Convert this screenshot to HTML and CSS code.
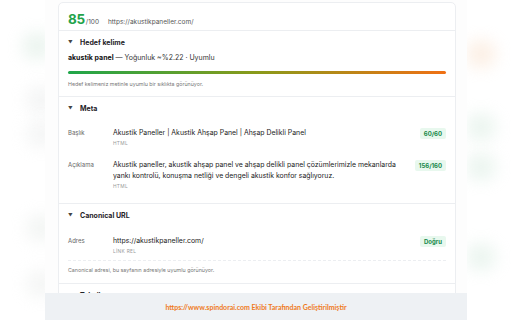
FILE: index.html
```html
<!DOCTYPE html>
<html lang="tr">
<head>
  <meta charset="UTF-8">
  <meta name="viewport" content="width=device-width, initial-scale=1.0">
  <link rel="stylesheet" href="styles.css">
  <title>SEO Analizi</title>
</head>
<body>
  <div class="blob blob-l1"></div>
  <div class="blob blob-l2"></div>
  <div class="blob blob-l3"></div>
  <div class="blob blob-l4"></div>
  <div class="blob blob-l5"></div>
  <div class="blob blob-r1"></div>
  <div class="blob blob-r2"></div>
  <div class="blob blob-r3"></div>
  <div class="blob blob-r4"></div>

  <main class="page">
    <div class="card">
      <header class="card-head">
        <span class="score">85</span><span class="score-max">/100</span>
        <span class="url">https://akustikpaneller.com/</span>
      </header>

      <section class="sec">
        <h2 class="sec-title"><span class="caret">▼</span>Hedef kelime</h2>
        <p class="kw"><b>akustik panel</b> — Yoğunluk ~%2.22 · Uyumlu</p>
        <div class="bar"></div>
        <p class="note">Hedef kelimeniz metinle uyumlu bir sıklıkta görünüyor.</p>
      </section>

      <section class="sec sec-meta">
        <h2 class="sec-title"><span class="caret">▼</span>Meta</h2>
        <div class="row">
          <span class="label">Başlık</span>
          <div class="value">
            <p>Akustik Paneller | Akustik Ahşap Panel | Ahşap Delikli Panel</p>
            <span class="src">HTML</span>
          </div>
          <span class="badge">60/60</span>
        </div>
        <div class="row">
          <span class="label">Açıklama</span>
          <div class="value">
            <p>Akustik paneller, akustik ahşap panel ve ahşap delikli panel çözümlerimizle mekanlarda yankı kontrolü, konuşma netliği ve dengeli akustik konfor sağlıyoruz.</p>
            <span class="src">HTML</span>
          </div>
          <span class="badge">156/160</span>
        </div>
      </section>

      <section class="sec sec-canon">
        <h2 class="sec-title"><span class="caret">▼</span>Canonical URL</h2>
        <div class="row">
          <span class="label">Adres</span>
          <div class="value">
            <p>https://akustikpaneller.com/</p>
            <span class="src">LİNK REL</span>
          </div>
          <span class="badge">Doğru</span>
        </div>
        <p class="note dotted">Canonical adresi, bu sayfanın adresiyle uyumlu görünüyor.</p>
      </section>

      <section class="sec">
        <h2 class="sec-title"><span class="caret">▼</span>Teknik</h2>
      </section>
    </div>

    <footer class="foot">https://www.spindorai.com Ekibi Tarafından Geliştirilmiştir</footer>
  </main>
</body>
</html>
```

FILE: styles.css
```css
*, *::before, *::after {
  margin: 0;
  padding: 0;
  box-sizing: border-box;
}

body {
  height: 320px;
  overflow: hidden;
  background: #ffffff;
  font-family: Inter, "Noto Sans", sans-serif;
  color: #1f2328;
  position: relative;
}

/* faint blurred shapes on both sides of the panel */
.blob {
  position: absolute;
  width: 30px;
  height: 28px;
  border-radius: 50%;
  filter: blur(8px);
  opacity: .4;
}

.blob-l1 { left: 22px; top: 32px; background: #cfe5d8; }
.blob-l2 { left: 26px; top: 86px; background: #e4e6e6; }
.blob-l3 { left: 26px; top: 120px; background: #e6e8e8; }
.blob-l4 { left: 26px; top: 214px; background: #e2e8e4; }
.blob-l5 { left: 26px; top: 270px; background: #e6e9e7; }
.blob-r1 { left: 466px; top: 40px; background: #f8d9bf; }
.blob-r2 { left: 466px; top: 113px; background: #cfe7d9; }
.blob-r3 { left: 466px; top: 153px; background: #cfe7d9; }
.blob-r4 { left: 466px; top: 243px; background: #cfe7d9; }

.page {
  position: relative;
  width: 422px;
  height: 320px;
  margin: 0 auto;
  padding: 2px 11px 0 13px;
  background: #fdfdfd;
}

.card {
  background: #fff;
  border: 1px solid #eceef1;
  border-radius: 5px;
}

.card-head {
  height: 28px;
  display: flex;
  align-items: baseline;
  padding: 8px 9px 0;
  border-bottom: 1px solid #eceef1;
}

.score {
  font-size: 13.5px;
  font-weight: 700;
  color: #22a34a;
  line-height: 16px;
  letter-spacing: -.3px;
}

.score-max {
  font-size: 6.5px;
  color: #555;
  margin-left: 1px;
}

.url {
  font-size: 6.5px;
  color: #555;
  margin-left: 9px;
}

.sec {
  padding: 7px 9px 8px;
  border-bottom: 1px solid #eceef1;
}

.sec-title {
  font-size: 7px;
  font-weight: 700;
  line-height: 10px;
  display: flex;
  align-items: center;
}

.caret {
  font-size: 4.5px;
  color: #444;
  width: 12px;
}

.kw {
  margin-top: 5px;
  font-size: 7px;
  line-height: 10px;
  color: #333;
}

.kw b {
  color: #111;
}

.bar {
  margin-top: 8px;
  height: 3px;
  border-radius: 2px;
  background: linear-gradient(90deg, #1fa64a, #8a9a1a 50%, #f07014);
}

.note {
  margin-top: 6px;
  font-size: 5.3px;
  line-height: 8px;
  color: #777;
}

.sec-meta {
  padding-bottom: 13px;
}

.sec-canon {
  padding-bottom: 9px;
}

.row {
  display: grid;
  grid-template-columns: 45px 1fr auto;
  align-items: start;
  margin-top: 13px;
}

.row + .row {
  margin-top: 12px;
}

.sec-canon .row {
  margin-top: 14px;
}

.label {
  font-size: 6px;
  line-height: 11px;
  color: #666;
}

.value {
  padding-right: 12px;
}

.value p {
  font-size: 6.9px;
  line-height: 11px;
  color: #222;
}

.src {
  display: block;
  margin-top: 1px;
  font-size: 4.8px;
  line-height: 8px;
  letter-spacing: .3px;
  color: #999;
}

.badge {
  margin-top: 1px;
  height: 11px;
  padding: 0 4px;
  border-radius: 2px;
  background: #e8f8ee;
  color: #16884a;
  font-size: 6px;
  font-weight: 700;
  line-height: 11px;
}

.dotted {
  margin-top: 5px;
  padding-top: 5px;
  border-top: 1px dashed #eceef1;
}

.foot {
  position: absolute;
  left: 0;
  right: 0;
  bottom: 0;
  height: 27px;
  background: #eef1f4;
  display: flex;
  align-items: center;
  justify-content: center;
  font-family: Lato, "Open Sans", sans-serif;
  font-size: 7px;
  font-weight: 700;
  color: #ef7a1c;
}
```
